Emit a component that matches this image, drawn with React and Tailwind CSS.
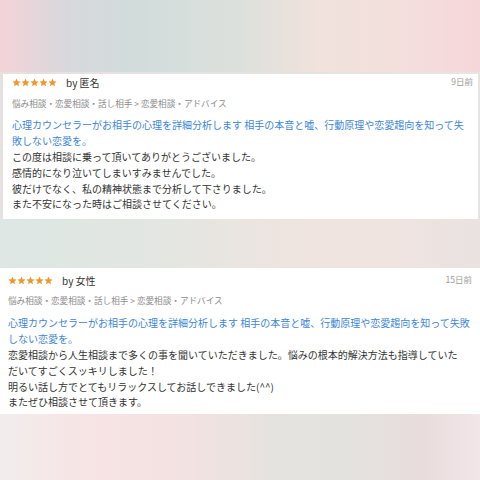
const font = { fontFamily: '"Noto Sans CJK JP", "Noto Sans", sans-serif' }

const Stars = () => (
  <div className="flex items-center">
    {[0, 1, 2, 3, 4].map((i) => (
      <svg key={i} width="9" height="9" viewBox="0 0 24 24" className="shrink-0">
        <path
          d="M12 1.5l3.1 7.1 7.7.7-5.8 5.1 1.7 7.6L12 18l-6.7 4 1.7-7.6-5.8-5.1 7.7-.7z"
          fill="#f0972c"
        />
      </svg>
    ))}
  </div>
)

const Review = ({ by, date, lines, className, dateClass, padTop, catGap, titleGap, padBottom }) => (
  <div className={`bg-white ${className}`} style={font}>
    <div className={`flex items-center justify-between h-[16px] ${padTop}`}>
      <div className="flex items-center gap-[9px]">
        <Stars />
        <span className="text-[10px] text-[#333]">by {by}</span>
      </div>
      <span className={`text-[8.5px] text-[#9a9a9a] ${dateClass}`}>{date}</span>
    </div>
    <div className={`text-[8.6px] leading-[14px] text-[#8c8c8c] ${catGap}`}>
      悩み相談・恋愛相談・話し相手 &gt; 恋愛相談・アドバイス
    </div>
    <div className={`text-[10px] leading-[16px] text-[#3d86d6] ${titleGap}`}>
      心理カウンセラーがお相手の心理を詳細分析します 相手の本音と嘘、行動原理や恋愛趨向を知って失敗しない恋愛を。
    </div>
    <div className={`text-[10px] leading-[15.75px] text-[#333] ${padBottom}`}>
      {lines.map((l, i) => (
        <div key={i}>{l}</div>
      ))}
    </div>
  </div>
)

export default function App() {
  return (
    <div className="w-[480px] h-[480px] overflow-hidden flex flex-col bg-[linear-gradient(to_right,#f4e4e2,#dfe4e1_40%,#eee3df_70%,#f2e0e0)]">
      <div className="h-[72px] shrink-0 bg-[linear-gradient(to_right,#f5d3d8_0%,#d8d8dc_14%,#d1dcdb_28%,#dce0dc_50%,#f0e2dc_66%,#f3e0dd_82%,#f6d6da_100%)]" />
      <div className="px-[3px] pr-[2px] bg-[linear-gradient(to_right,#e6e0e0,#e8e4e2)]">
        <Review
          by="匿名"
          date="9日前"
          className="px-[9px]"
          dateClass="mr-[-4px] self-start mt-[1px]"
          padTop="mt-[2px]"
          catGap="mt-[6px]"
          titleGap="mt-[7px]"
          padBottom="pb-[7px]"
          lines={[
            'この度は相談に乗って頂いてありがとうございました。',
            '感情的になり泣いてしまいすみませんでした。',
            '彼だけでなく、私の精神状態まで分析して下さりました。',
            'また不安になった時はご相談させてください。',
          ]}
        />
      </div>
      <div className="h-[49px] shrink-0 bg-[linear-gradient(to_right,#dde7e4_0%,#e2e6e2_30%,#eee4e0_60%,#f0e4e1_80%,#e9e2e0_100%)]" />
      <Review
        by="女性"
        date="15日前"
        className="px-[8px]"
        dateClass="self-start mt-[1px]"
        padTop="mt-[4px]"
        catGap="mt-[5px]"
        titleGap="mt-[8px]"
        padBottom="pb-[4px]"
        lines={[
          '恋愛相談から人生相談まで多くの事を聞いていただきました。悩みの根本的解決方法も指導していた',
          'だいてすごくスッキリしました！',
          '明るい話し方でとてもリラックスしてお話しできました(^^)',
          'またぜひ相談させて頂きます。',
        ]}
      />
      <div className="flex-1 bg-[linear-gradient(to_right,#f2eded_0%,#f7e3e3_20%,#f2e2e1_40%,#e5e3df_58%,#e4e2de_72%,#e8dcdd_88%,#f3e6e8_100%)]" />
    </div>
  )
}
